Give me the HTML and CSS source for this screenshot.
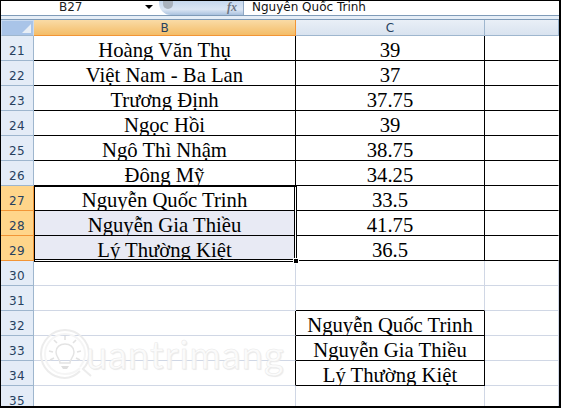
FILE: index.html
```html
<!DOCTYPE html>
<html lang="vi">
<head>
  <meta charset="UTF-8" />
  <title>Bảng tính</title>
  <link rel="stylesheet" href="styles.css">
</head>
<body>
  <div class="sheet">
    <div class="formula-bar">
      <div class="name-box">
        <span class="name-text">B27</span>
        <span class="name-arrow"></span>
      </div>
      <div class="fx-box">
        <span class="fx-knob"></span>
        <span class="fx-label">fx</span>
      </div>
      <div class="formula-text">Nguyễn Quốc Trinh</div>
    </div>
    <div class="bar-gap"></div>

    <table class="grid">
      <colgroup>
        <col class="col-head"><col class="col-b"><col class="col-c"><col class="col-d">
      </colgroup>
      <thead>
        <tr>
          <th class="corner"><span class="corner-mark"></span></th>
          <th class="head-on">B</th>
          <th>C</th>
          <th></th>
        </tr>
      </thead>
      <tbody>
        <tr class="data"><th>21</th><td>Hoàng Văn Thụ</td><td>39</td><td></td></tr>
        <tr class="data"><th>22</th><td>Việt Nam - Ba Lan</td><td>37</td><td></td></tr>
        <tr class="data"><th>23</th><td>Trương Định</td><td>37.75</td><td></td></tr>
        <tr class="data"><th>24</th><td>Ngọc Hồi</td><td>39</td><td></td></tr>
        <tr class="data"><th>25</th><td>Ngô Thì Nhậm</td><td>38.75</td><td></td></tr>
        <tr class="data"><th>26</th><td>Đông Mỹ</td><td>34.25</td><td></td></tr>
        <tr class="data"><th class="row-on">27</th><td>Nguyễn Quốc Trinh</td><td>33.5</td><td></td></tr>
        <tr class="data"><th class="row-on">28</th><td class="picked">Nguyễn Gia Thiều</td><td>41.75</td><td></td></tr>
        <tr class="data"><th class="row-on">29</th><td class="picked">Lý Thường Kiệt</td><td>36.5</td><td></td></tr>
        <tr><th>30</th><td></td><td></td><td></td></tr>
        <tr><th>31</th><td></td><td class="edge-b"></td><td></td></tr>
        <tr><th>32</th><td class="edge-r"></td><td class="boxed">Nguyễn Quốc Trinh</td><td></td></tr>
        <tr><th>33</th><td class="edge-r"></td><td class="boxed">Nguyễn Gia Thiều</td><td></td></tr>
        <tr><th>34</th><td class="edge-r"></td><td class="boxed">Lý Thường Kiệt</td><td></td></tr>
        <tr><th>35</th><td></td><td></td><td></td></tr>
      </tbody>
    </table>

    <div class="selection"><span class="fill-handle"></span></div>

    <div class="watermark">
      <svg class="wm-icon" width="62" height="56" viewBox="0 0 62 56" fill="none">
        <path d="M42 44C37 49 32 51 27 51C14 51 3 41 3 27C3 14 14 3 27 3C40 3 51 14 51 27C51 33 49 38 45 42L53 49" stroke="#ececec" stroke-width="2"/>
        <path d="M42 41C38 45 33 47 27 47C16 47 7 38 7 27C7 16 16 7 27 7C38 7 47 16 47 27C47 32 45 36 42 40" stroke="#f5f5f5" stroke-width="2"/>
        <path d="M22 36C22 32 18 30 18 25C18 20 22 17 27 17C32 17 36 20 36 25C36 30 32 32 32 36Z" stroke="#e4e4e4" stroke-width="1.5"/>
        <path d="M23 39H31L29 42H25Z" fill="#dedede"/>
        <path d="M27 9V13M16 13L19 16M38 13L35 16M11 24L15 25M43 24L39 25M12 33L16 31M42 33L38 31" stroke="#e2e2e2" stroke-width="1.6"/>
      </svg>
      <span class="wm-text">uantrimang</span>
    </div>
  </div>
</body>
</html>
```

FILE: styles.css
```css
* {
  box-sizing: border-box;
}
html, body {
  margin: 0;
  padding: 0;
  background: #fff;
}
.sheet {
  position: relative;
  width: 561px;
  height: 408px;
  overflow: hidden;
  background: #fff;
  border-top: 1px solid #000;
  border-left: 1px solid #000;
  border-right: 2px solid #000;
  border-bottom: 2px solid #000;
  font-family: "DejaVu Sans", sans-serif;
}

/* formula bar */
.formula-bar {
  display: flex;
  height: 15px;
  font-size: 12px;
  line-height: 12px;
  color: #222;
  border-bottom: 1px solid #7f9bb8;
}
.name-box {
  flex: 0 0 158px;
  display: flex;
  align-items: flex-start;
  padding-left: 58px;
}
.name-text {
  width: 86px;
}
.name-arrow {
  margin-top: 4px;
  border-left: 4px solid transparent;
  border-right: 4px solid transparent;
  border-top: 4px solid #000;
}
.fx-box {
  position: relative;
  flex: 0 0 85px;
  border-radius: 0 0 0 12px;
  border-right: 1px solid #8fa8c4;
  background: linear-gradient(#c6d8ee, #dbe6f4 60%, #a9c1de);
}
.fx-knob {
  position: absolute;
  left: 4px;
  top: 0;
  width: 10px;
  height: 8px;
  border-radius: 0 0 5px 5px;
  background: #a9b2bd;
}
.fx-label {
  position: absolute;
  right: 6px;
  top: 0;
  font-family: "Liberation Serif", serif;
  font-style: italic;
  font-weight: bold;
  font-size: 12px;
  color: #6d7683;
}
.formula-text {
  flex: 1;
  padding-left: 8px;
  color: #111;
}
.bar-gap {
  height: 4px;
  background: #e6eef7;
  border-bottom: 1px solid #7f9bb8;
}

/* grid */
.grid {
  table-layout: fixed;
  border-collapse: separate;
  border-spacing: 0;
  width: 558px;
}
.col-head { width: 33px; }
.col-b { width: 262px; }
.col-c { width: 189px; }
.col-d { width: 74px; }

thead th {
  height: 16px;
  padding: 1px 0 0;
  font-weight: normal;
  font-size: 12px;
  line-height: 14px;
  color: #27415f;
  background: linear-gradient(#e9eff7, #d9e3ef);
  border-right: 1px solid #9eb6ce;
  border-bottom: 1px solid #9eb6ce;
}
thead th.corner {
  position: relative;
  background: #a9c4e8;
  border: 1px solid #c9daf0;
  border-bottom-color: #9eb6ce;
}
.corner-mark {
  position: absolute;
  right: 2px;
  bottom: 2px;
  border-left: 9px solid transparent;
  border-bottom: 9px solid #e8eef6;
}
thead th.head-on {
  background: linear-gradient(#f9dba6, #f4bd68);
  border-right-color: #f29536;
  border-bottom-color: #f29536;
}
tbody th {
  padding: 5px 0 0;
  font-weight: normal;
  font-size: 12px;
  line-height: 16px;
  letter-spacing: 0.3px;
  color: #27415f;
  background: #e4ecf7;
  border-right: 1px solid #9eb6ce;
  border-bottom: 1px solid #9eb6ce;
}
tbody th.row-on {
  background: #ffd58a;
  border-right-color: #f29536;
  border-bottom-color: #f29536;
}
tbody td {
  height: 25px;
  padding: 4px 0 0;
  text-align: center;
  white-space: nowrap;
  overflow: hidden;
  font-family: "Liberation Serif", serif;
  font-size: 20.7px;
  line-height: 20px;
  color: #000;
  border-right: 1px solid #d0d7e5;
  border-bottom: 1px solid #d0d7e5;
}
.data td {
  border-right-color: #000;
  border-bottom-color: #000;
}
.data td:last-child {
  border-right-color: transparent;
}
td.picked {
  background: #e8eaf4;
}
td.edge-r {
  border-right-color: #000;
}
td.edge-b {
  border-bottom-color: #000;
}
td.boxed {
  border-right-color: #000;
  border-bottom-color: #000;
}

/* selection B27:B29 */
.selection {
  position: absolute;
  left: 33px;
  top: 185px;
  width: 263px;
  height: 76px;
  border: 1px solid #000;
  box-shadow: inset -1px -1px 0 #fff, inset -2px -2px 0 #000;
}
.fill-handle {
  position: absolute;
  right: -3px;
  bottom: -3px;
  width: 4px;
  height: 4px;
  background: #000;
  border: 1px solid #fff;
  box-sizing: content-box;
}

/* watermark */
.watermark {
  position: absolute;
  left: 37px;
  top: 326px;
  display: flex;
  align-items: flex-start;
  pointer-events: none;
}
.wm-icon {
  flex: none;
}
.wm-text {
  margin: 5px 0 0 -14px;
  font-family: "Lato", sans-serif;
  font-size: 38px;
  line-height: 44px;
  letter-spacing: 1px;
  color: rgba(255, 255, 255, 0.8);
  -webkit-text-stroke: 0.5px #e8e8e8;
  text-shadow: 1px 1px 1px #ececec;
}
```
